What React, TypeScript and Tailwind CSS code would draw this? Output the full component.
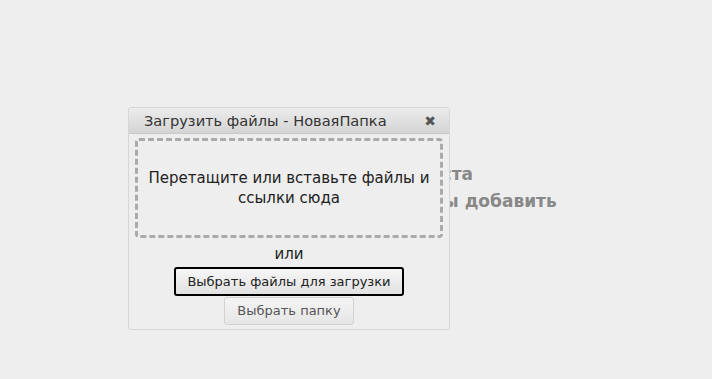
export default function App() {
  return (
    <div className="relative w-[712px] h-[379px] bg-[#eeeeee] overflow-hidden" style={{ fontFamily: '"DejaVu Sans", Verdana, sans-serif' }}>
      {/* Empty folder hint behind the dialog */}
      <div className="pt-[161px] pr-[24px] flex flex-col items-center text-[17px] font-bold text-[#888888] leading-[27px]">
        <p>Эта папка пока ещё пуста</p>
        <p>Перетащите файлы сюда, чтобы добавить</p>
      </div>

      {/* Upload dialog */}
      <div className="absolute left-[128px] top-[107px] w-[322px] h-[223px] border border-[#d6d6d6] rounded-[3px] bg-[#eeeeee] flex flex-col">
        <div className="h-[26px] flex items-center justify-between pl-[15px] pr-[13px] rounded-t-[3px] border-b border-[#c8c8c8] bg-gradient-to-b from-[#ececec] to-[#d4d4d4]">
          <span className="text-[14.6px] text-[#333333]">Загрузить файлы - НоваяПапка</span>
          <span className="text-[14px] font-bold text-[#555555] leading-none">✖</span>
        </div>
        <div className="mx-[6px] mt-[4px] h-[100px] border-[3px] border-dashed border-[#aaaaaa] rounded-[4px] flex items-center justify-center text-center px-[8px] text-[15px] leading-[20px] text-[#222222]">
          Перетащите или вставьте файлы и ссылки сюда
        </div>
        <div className="flex flex-col items-center">
          <p className="mt-[6px] text-[15px] leading-[20px] text-[#222222]">или</p>
          <button className="mt-[3px] h-[29px] px-[11px] border-2 border-black rounded-[3px] bg-gradient-to-b from-[#f6f6f6] to-[#e2e2e2] text-[13px] text-[#222222]">
            Выбрать файлы для загрузки
          </button>
          <button className="mt-[1px] h-[28px] px-[12px] border border-[#d2d2d2] rounded-[3px] bg-gradient-to-b from-[#f4f4f4] to-[#e6e6e6] text-[13px] text-[#555555]">
            Выбрать папку
          </button>
        </div>
      </div>
    </div>
  );
}
